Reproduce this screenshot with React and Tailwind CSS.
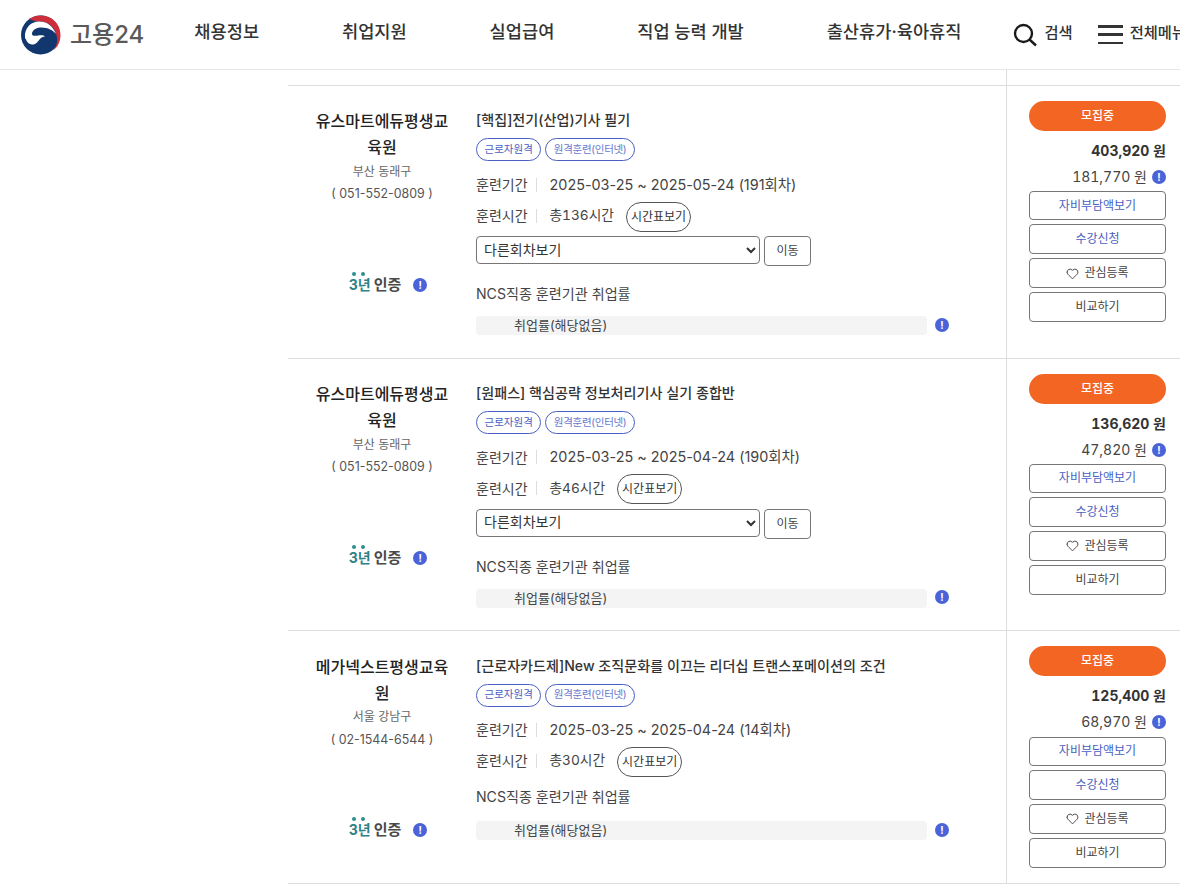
import { Heart } from 'lucide-react'

const FONT = 'font-["Inter","Noto_Sans_CJK_KR",sans-serif]'

const NAV = ['채용정보', '취업지원', '실업급여', '직업 능력 개발', '출산휴가·육아휴직']

const COURSES = [
  {
    org: '유스마트에듀평생교육원',
    region: '부산 동래구',
    phone: '( 051-552-0809 )',
    title: '[핵집]전기(산업)기사 필기',
    period: '2025-03-25 ~ 2025-05-24 (191회차)',
    hours: '총136시간',
    price: '403,920 원',
    self: '181,770 원',
    select: true,
  },
  {
    org: '유스마트에듀평생교육원',
    region: '부산 동래구',
    phone: '( 051-552-0809 )',
    title: '[원패스] 핵심공략 정보처리기사 실기 종합반',
    period: '2025-03-25 ~ 2025-04-24 (190회차)',
    hours: '총46시간',
    price: '136,620 원',
    self: '47,820 원',
    select: true,
  },
  {
    org: '메가넥스트평생교육원',
    region: '서울 강남구',
    phone: '( 02-1544-6544 )',
    title: '[근로자카드제]New 조직문화를 이끄는 리더십 트랜스포메이션의 조건',
    period: '2025-03-25 ~ 2025-04-24 (14회차)',
    hours: '총30시간',
    price: '125,400 원',
    self: '68,970 원',
    select: false,
  },
]

function InfoDot() {
  return (
    <span className="flex h-[14px] w-[14px] shrink-0 items-center justify-center rounded-full bg-[#4a63d8] text-[10px] leading-none font-bold text-white">
      !
    </span>
  )
}

function Logo() {
  return (
    <svg width="42" height="40" viewBox="0 0 42 40" className="shrink-0">
      <circle cx="20.500" cy="20" r="19.500" fill="#12376e" />
      <path d="M9 4C13 1.500 17 .5 21 .5c11 0 19.500 8.500 19.500 19.500 0 7-3 12-7 15.500 3.500-5 4.500-10 3-15.500C34.500 11 27 6 19 6.500 15 6.700 12 5 9 4Z" fill="#cd2e3a" />
      <path d="M5 23C4 13 11 6.500 19 6.500c8 0 14 4.500 17 12.500-3-4-9-7-16-6.500-5 .3-8 3.500-8 6.500 0 2 3 2 6 1.500 3-.5 6-.5 7 1-2 0-4 1-5.500 3-2 2.500-4 5.500-7.500 5-3-.5-5-2-6-5Z" fill="#fff" />
    </svg>
  )
}

function Header() {
  return (
    <header className="flex h-[70px] items-center border-b border-[#e6e6e6] pl-[20px] whitespace-nowrap">
      <Logo />
      <span className="ml-[8px] w-[76px] text-[24px] font-medium text-[#5a5a5a]">고용24</span>
      <nav className="mb-[4px] ml-[50px] flex gap-[82.900px] text-[17.600px] font-medium text-[#333]">
        {NAV.map((item) => (
          <span key={item}>{item}</span>
        ))}
      </nav>
      <svg width="24" height="24" viewBox="0 0 24 24" fill="none" stroke="#1a1a1a" strokeWidth="2.400" className="ml-[52px] shrink-0">
        <circle cx="10.500" cy="10.500" r="8.500" />
        <path d="m16.500 16.500 6.500 6" />
      </svg>
      <span className="mb-[2px] ml-[7px] text-[15.300px] font-medium text-[#333]">검색</span>
      <span className="ml-[25px] flex h-[19px] w-[25px] shrink-0 flex-col justify-between">
        <i className="h-[2.500px] bg-[#333]" />
        <i className="h-[2.500px] bg-[#333]" />
        <i className="h-[2.500px] bg-[#333]" />
      </span>
      <span className="mb-[2px] ml-[7px] text-[15.300px] font-medium text-[#333]">전체메뉴</span>
    </header>
  )
}

function SideButton({ blue, short, children }) {
  return (
    <button className={`flex ${short ? 'h-[29px]' : 'h-[30px]'} w-full items-center justify-center gap-[5px] rounded-[4px] border border-[#767676] bg-white text-[12px] ${blue ? 'text-[#4a5fc1]' : 'text-[#444]'}`}>
      {children}
    </button>
  )
}

function CourseRow({ course }) {
  return (
    <div className="flex border-b border-[#ddd]">
      {/* Institution */}
      <div className="w-[188px] shrink-0 px-[27px] pt-[22.400px] text-center">
        <div className="text-[16px] leading-[26px] font-medium text-[#222]">{course.org}</div>
        <div className="mt-[1.800px] text-[12px] leading-[20px] text-[#666]">{course.region}</div>
        <div className="mt-[2.200px] text-[12.400px] leading-[20px] text-[#555]">{course.phone}</div>
        <div className="mt-[70.700px] flex items-center justify-center gap-[12px] pl-[12px]">
          <span className="relative flex items-baseline text-[15px] leading-[20px] font-bold">
            <span className="absolute top-[-3px] left-[3px] h-[4px] w-[4px] rounded-full bg-[#2f8f8f]" />
            <span className="absolute top-[-3px] left-[12px] h-[4px] w-[4px] rounded-full bg-[#2f8f8f]" />
            <span className="text-[14px] text-[#2f8288]">3년</span>
            <span className="ml-[3px] text-[#4a4a4a]">인증</span>
          </span>
          <InfoDot />
        </div>
      </div>

      {/* Course */}
      <div className="min-w-0 flex-1 pt-[23.400px] pb-[22.200px]">
        <div className="text-[14.100px] leading-[22px] font-medium text-[#333]">{course.title}</div>
        <div className="mt-[7px] flex gap-[4px]">
          <span className="flex h-[23px] items-center rounded-full border border-[#4a5fc1] px-[7.500px] text-[10.500px] text-[#4a5fc1]">근로자원격</span>
          <span className="flex h-[23px] items-center rounded-full border border-[#4a5fc1] px-[7.500px] text-[10.500px] tracking-[-0.3px] text-[#6a78cc]">원격훈련(인터넷)</span>
        </div>
        <div className="mt-[12.200px] flex h-[22px] items-center text-[14px] text-[#444]">
          <span>훈련기간</span>
          <span className="mx-[8px] h-[14px] w-px bg-[#ddd]" />
          <span className="ml-[5px] text-[14.400px]">{course.period}</span>
        </div>
        <div className="mt-[4px] flex h-[32px] items-center text-[14px] text-[#444]">
          <span>훈련시간</span>
          <span className="mx-[8px] h-[14px] w-px bg-[#ddd]" />
          <span className="ml-[5px] text-[13.700px] tabular-nums">{course.hours}</span>
          <span className="mt-[2px] ml-[12px] flex h-[30px] items-center rounded-full border border-[#555] px-[4px] text-[12px] text-[#333]">시간표보기</span>
        </div>
        {course.select && (
          <div className="mt-[4.800px] flex items-start gap-[4px]">
            <select className="h-[28px] w-[284px] rounded-[4px] border border-[#767676] bg-white pb-[2px] pl-[3px] text-[14px] text-[#333]">
              <option>다른회차보기</option>
            </select>
            <button className="h-[30px] w-[47px] rounded-[4px] border border-[#767676] bg-white text-[12px] text-[#444]">이동</button>
          </div>
        )}
        <div className={`${course.select ? 'mt-[17px]' : 'mt-[9.300px]'} text-[14.100px] leading-[22px] text-[#444]`}>NCS직종 훈련기관 취업률</div>
        <div className={`${course.select ? 'mt-[11px]' : 'mt-[13px]'} flex items-center`}>
          <div className="h-[19px] w-[451px] rounded-[4px] bg-[#f4f4f4] pl-[38px] text-[13px] leading-[19px] text-[#444]">취업률(해당없음)</div>
          <span className="mb-[2px] ml-[8px]">
            <InfoDot />
          </span>
        </div>
      </div>

      {/* Price and actions */}
      <div className="w-[174px] shrink-0 border-l border-[#ddd] pt-[15px] pr-[14px] pb-[15.200px] pl-[22px]">
        <div className="flex h-[30px] items-center justify-center rounded-full bg-[#f26522] text-[12px] font-medium text-white">모집중</div>
        <div className="mt-[9.300px] text-right text-[14px] leading-[22px] font-bold text-[#333] tabular-nums">{course.price}</div>
        <div className="mt-[4px] flex items-center justify-end gap-[5px] text-[14px] leading-[22px] text-[#444] tabular-nums">
          <span>{course.self}</span>
          <InfoDot />
        </div>
        <div className="mt-[3.100px] flex flex-col gap-[4px]">
          <SideButton blue short>자비부담액보기</SideButton>
          <SideButton blue>수강신청</SideButton>
          <SideButton>
            <Heart size={13} strokeWidth={1.500} className="text-[#222]" />
            관심등록
          </SideButton>
          <SideButton>비교하기</SideButton>
        </div>
      </div>
    </div>
  )
}

export default function App() {
  return (
    <div className={`h-[892px] w-[1180px] overflow-hidden bg-white ${FONT}`}>
      <Header />
      <main className="ml-[288px] w-[892px]">
        <div className="flex h-[16px] border-b border-[#ddd]">
          <div className="w-[718px]" />
          <div className="flex-1 border-l border-[#ddd]" />
        </div>
        {COURSES.map((course) => (
          <CourseRow key={course.title} course={course} />
        ))}
      </main>
    </div>
  )
}
